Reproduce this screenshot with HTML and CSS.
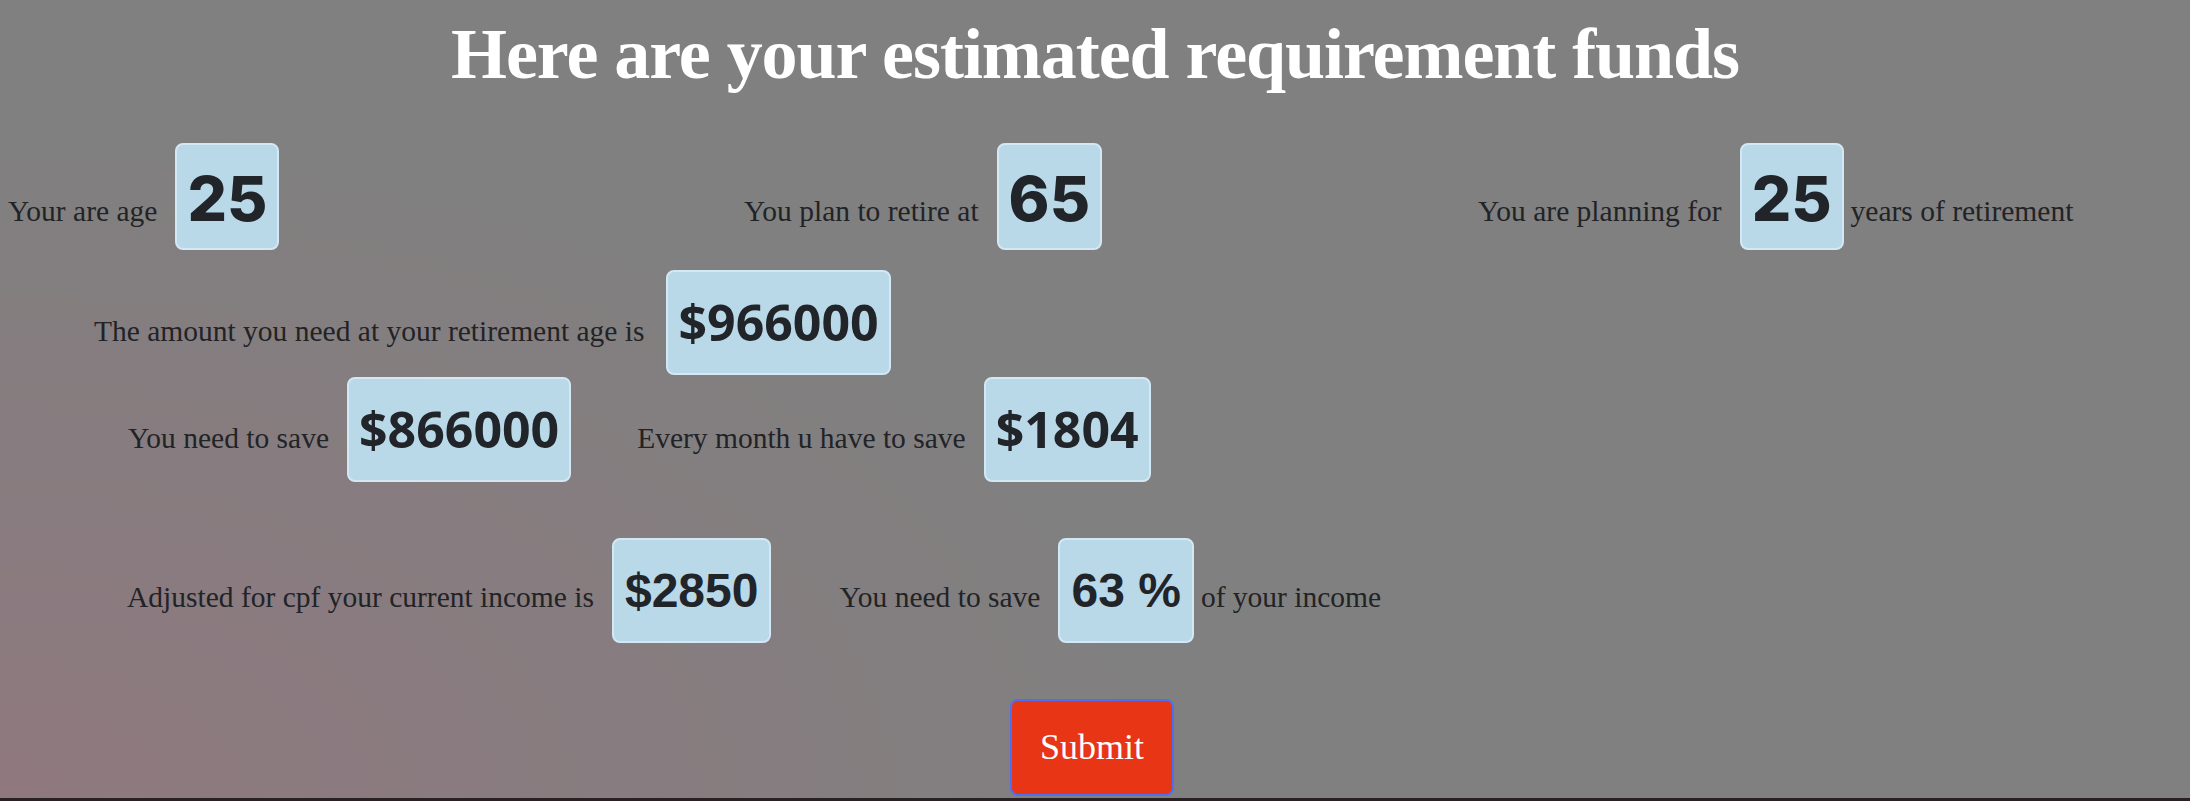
FILE: index.html
```html
<!DOCTYPE html>
<html lang="en">
<head>
<meta charset="utf-8">
<title>Retirement funds</title>
<link rel="stylesheet" href="styles.css">
</head>
<body>
<div class="page">
  <h1 class="title">Here are your estimated requirement funds</h1>

  <div class="row-top">
    <div class="item"><span class="label">Your are age</span><span class="val val-lg">25</span></div>
    <div class="item"><span class="label">You plan to retire at</span><span class="val val-lg">65</span></div>
    <div class="item"><span class="label">You are planning for</span><span class="val val-lg">25</span><span class="label after">years of retirement</span></div>
  </div>

  <div class="row row-need">
    <div class="item"><span class="label">The amount you need at your retirement age is</span><span class="val val-md val-wide-gap">$966000</span></div>
  </div>

  <div class="row row-save">
    <div class="item"><span class="label">You need to save</span><span class="val val-md">$866000</span></div>
    <div class="item"><span class="label">Every month u have to save</span><span class="val val-md">$1804</span></div>
  </div>

  <div class="row row-income">
    <div class="item"><span class="label">Adjusted for cpf your current income is</span><span class="val val-sm">$2850</span></div>
    <div class="item"><span class="label">You need to save</span><span class="val val-sm">63 %</span><span class="label after">of your income</span></div>
  </div>

  <div class="actions">
    <button class="submit" type="button">Submit</button>
  </div>
</div>
</body>
</html>
```

FILE: styles.css
```css
html, body {
  margin: 0;
  padding: 0;
}

body {
  background: #2a2124;
}

.page {
  height: 798px;
  overflow: hidden;
  background:
    radial-gradient(ellipse 55% 85% at 0% 100%, rgba(148, 118, 126, 0.75) 0%, rgba(128, 128, 128, 0) 100%),
    #808080;
  font-family: "Liberation Serif", "Times New Roman", serif;
  color: #222326;
}

.title {
  margin: 0;
  padding-top: 11px;
  font-family: "Liberation Serif", serif;
  font-weight: 700;
  font-size: 72px;
  line-height: 87px;
  letter-spacing: -1.05px;
  text-align: center;
  color: #ffffff;
}

.row-top {
  display: grid;
  grid-template-columns: 736px 734px 1fr;
  padding-left: 8px;
  margin-top: 45px;
}

.row {
  display: flex;
  align-items: baseline;
}

.item {
  display: flex;
  align-items: baseline;
}

.label {
  font-size: 29.5px;
  white-space: nowrap;
}

.label.after {
  margin-left: 7px;
}

.val {
  margin-left: 18px;
  box-sizing: border-box;
  background: #b9d8e8;
  border: 2px solid #d4e7f4;
  border-radius: 8px;
  color: #212529;
  white-space: nowrap;
}

.val-wide-gap {
  margin-left: 22px;
}

.val-lg {
  font-family: Inter, "Liberation Sans", sans-serif;
  font-weight: 800;
  font-size: 62px;
  line-height: 62px;
  padding: 22.5px 10px 18.5px;
}

.val-md {
  font-family: "Open Sans", "Liberation Sans", sans-serif;
  font-weight: 700;
  font-size: 50px;
  line-height: 50px;
  padding: 24.6px 10px 26.4px;
}

.val-sm {
  font-family: "Liberation Sans", Arial, sans-serif;
  font-weight: 700;
  font-size: 48px;
  line-height: 48px;
  padding: 27.4px 11px 25.6px;
}

.row-need {
  padding-left: 94px;
  margin-top: 20px;
}

.row-save {
  padding-left: 128px;
  margin-top: 2px;
}

.row-save .item + .item {
  margin-left: 66px;
}

.row-income {
  padding-left: 127px;
  margin-top: 56px;
}

.row-income .item + .item {
  margin-left: 68px;
}

.actions {
  display: flex;
  justify-content: center;
  margin-top: 56px;
  padding-right: 6px;
}

.submit {
  font-family: "Liberation Serif", serif;
  font-size: 36px;
  line-height: 41px;
  color: #ffffff;
  background: #e83516;
  border: 2px solid #4f6ef0;
  border-radius: 8px;
  padding: 26px 28px;
  cursor: pointer;
}
```
